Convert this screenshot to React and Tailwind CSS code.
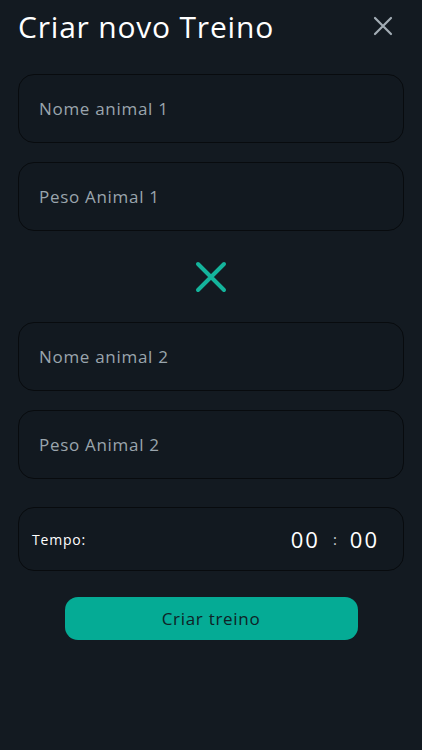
export default function App() {
  const font = { fontFamily: '"Open Sans", "Liberation Sans", sans-serif' };
  const Field = ({ label, className }) => (
    <div className={`h-[69px] rounded-[16px] border-[1.5px] border-[#080b0e] bg-[#121920] flex items-center pl-[20px] ${className}`}>
      <span className="text-[17px] text-[#9aa5ad] tracking-[0.7px]">{label}</span>
    </div>
  );
  return (
    <div className="w-[422px] h-[750px] bg-[#131a21] px-[18px] overflow-hidden" style={font}>
      <div className="flex items-center justify-between h-[52px] pt-[1px]">
        <h1 className="text-[30px] font-normal text-white tracking-[0.8px] leading-none">Criar novo Treino</h1>
        <svg width="20" height="20" viewBox="0 0 20 20" className="mr-[11px] mt-[-1px]">
          <path d="M2 2 L18 18 M18 2 L2 18" stroke="#a3adb5" strokeWidth="2.2" strokeLinecap="round" />
        </svg>
      </div>
      <Field label="Nome animal 1" className="mt-[22px]" />
      <Field label="Peso Animal 1" className="mt-[19px]" />
      <div className="flex justify-center mt-[30px] mb-[29px]">
        <svg width="32" height="32" viewBox="0 0 32 32">
          <path d="M3 3 L29 29 M29 3 L3 29" stroke="#14b49c" strokeWidth="4" strokeLinecap="round" />
        </svg>
      </div>
      <Field label="Nome animal 2" />
      <Field label="Peso Animal 2" className="mt-[19px]" />
      <div className="mt-[28px] h-[64px] rounded-[16px] border-[1.5px] border-[#080b0e] bg-[#121920] flex items-center justify-between pl-[13px] pr-[26px]">
        <span className="text-[14px] text-white tracking-[0.8px]">Tempo:</span>
        <div className="flex items-center text-[22px] text-white">
          <span className="tracking-[2px]">00</span>
          <span className="mx-[13px] text-[15px] text-[#c8ced2]">:</span>
          <span className="tracking-[2px] mr-[-2px]">00</span>
        </div>
      </div>
      <div className="flex justify-center mt-[26px]">
        <button className="w-[293px] h-[43px] rounded-[13px] bg-[#05ab95] text-[17px] text-[#0f2226] tracking-[0.7px] flex items-center justify-center">
          Criar treino
        </button>
      </div>
    </div>
  );
}
